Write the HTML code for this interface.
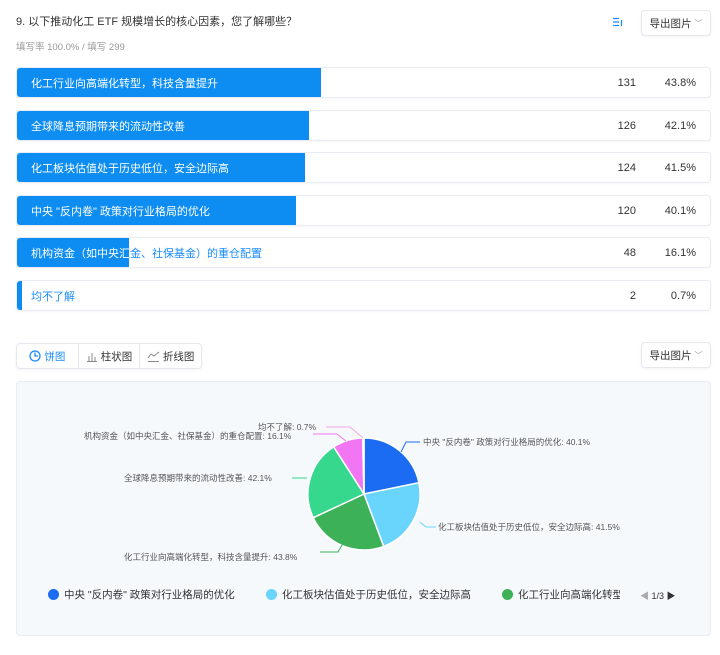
<!DOCTYPE html>
<html><head><meta charset="utf-8"><style>
*{margin:0;padding:0;box-sizing:border-box}
body{width:720px;height:655px;background:#fff;font-family:"Liberation Sans","Noto Sans CJK SC",sans-serif;position:relative;overflow:hidden;color:#333}
.abs{position:absolute}
.title{left:16px;top:13px;font-size:11px;color:#333}
.sub{left:16px;top:39px;font-size:9.5px;color:#999}
.btn{border:1px solid #e6e8ee;border-radius:4px;background:#fff;font-size:10.5px;color:#333;display:flex;align-items:center;justify-content:center;box-shadow:0 1px 3px rgba(0,0,0,.05)}
.row{position:absolute;left:16px;width:695px;height:31px;border:1px solid #e9edf3;border-radius:4px;background:#fff;overflow:hidden;box-shadow:0 1px 2px rgba(0,0,0,.04)}
.row .lb{position:absolute;left:14px;top:2px;line-height:29px;font-size:11px;color:#1a8cff;white-space:nowrap}
.row .bar{position:absolute;left:0;top:0;height:100%;background:#0d8cf2;overflow:hidden}
.row .bar .lb{color:#fff}
.row .n{position:absolute;right:74px;top:1px;line-height:29px;font-size:11px;color:#333}
.row .p{position:absolute;right:14px;top:1px;line-height:29px;font-size:11px;color:#333}
.tabs{left:16px;top:343px;width:186px;height:26px;border:1px solid #e6e8ee;border-radius:4px;display:flex;font-size:10.5px;box-shadow:0 1px 3px rgba(0,0,0,.05)}
.tabs div{flex:1;display:flex;align-items:center;justify-content:center;border-right:1px solid #e6e8ee;gap:3px}
.tabs div:last-child{border-right:none}
.panel{left:16px;top:381px;width:695px;height:255px;background:#f6f9fc;border:1px solid #e8edf3;border-radius:4px}
.pl{font-size:8.5px;color:#555;white-space:nowrap}
.lg{font-size:10.5px;color:#333;white-space:nowrap;top:587px}
.dot{display:inline-block;width:11px;height:11px;border-radius:50%;vertical-align:-2px;margin-right:5px}
</style></head><body>
<div class="abs title">9. 以下推动化工 ETF 规模增长的核心因素，您了解哪些？</div>
<div class="abs sub">填写率 100.0% / 填写 299</div>
<svg class="abs" style="left:613px;top:17px" width="10" height="10" viewBox="0 0 10 10"><path d="M0 1.5H6M0 5H6M0 8.5H6M8.5 3V9" stroke="#1a8cff" stroke-width="1.3"/></svg>
<div class="abs btn" style="left:641px;top:10px;width:70px;height:26px">导出图片 <span style="color:#999;font-size:8px;margin-left:3px">﹀</span></div>

<div class="row" style="top:67px"><div class="lb">化工行业向高端化转型，科技含量提升</div><div class="bar" style="width:304px"><div class="lb">化工行业向高端化转型，科技含量提升</div></div><div class="n">131</div><div class="p">43.8%</div></div>
<div class="row" style="top:110px"><div class="lb">全球降息预期带来的流动性改善</div><div class="bar" style="width:292px"><div class="lb">全球降息预期带来的流动性改善</div></div><div class="n">126</div><div class="p">42.1%</div></div>
<div class="row" style="top:152px"><div class="lb">化工板块估值处于历史低位，安全边际高</div><div class="bar" style="width:288px"><div class="lb">化工板块估值处于历史低位，安全边际高</div></div><div class="n">124</div><div class="p">41.5%</div></div>
<div class="row" style="top:195px"><div class="lb">中央 "反内卷" 政策对行业格局的优化</div><div class="bar" style="width:279px"><div class="lb">中央 "反内卷" 政策对行业格局的优化</div></div><div class="n">120</div><div class="p">40.1%</div></div>
<div class="row" style="top:237px"><div class="lb">机构资金（如中央汇金、社保基金）的重仓配置</div><div class="bar" style="width:112px"><div class="lb">机构资金（如中央汇金、社保基金）的重仓配置</div></div><div class="n">48</div><div class="p">16.1%</div></div>
<div class="row" style="top:280px"><div class="lb">均不了解</div><div class="bar" style="width:5px"><div class="lb">均不了解</div></div><div class="n">2</div><div class="p">0.7%</div></div>

<div class="abs tabs">
<div style="color:#1a8cff"><svg width="12" height="12" viewBox="0 0 12 12"><circle cx="6" cy="6" r="5" fill="none" stroke="#1a8cff" stroke-width="1.3"/><path d="M6 2.5V6H9" fill="none" stroke="#1a8cff" stroke-width="1.3"/></svg>饼图</div>
<div><svg width="12" height="11" viewBox="0 0 12 11"><path d="M1 10.5H11M3 10V5M6 10V2M9 10V6" stroke="#888" stroke-width="1"/></svg>柱状图</div>
<div><svg width="13" height="11" viewBox="0 0 13 11"><path d="M1 7L4 3L7 5L12 1M1 10.5H12" fill="none" stroke="#888" stroke-width="1"/></svg>折线图</div>
</div>
<div class="abs btn" style="left:641px;top:342px;width:70px;height:26px">导出图片 <span style="color:#999;font-size:8px;margin-left:3px">﹀</span></div>

<div class="abs panel"></div>
<svg class="abs" style="left:0;top:0" width="720" height="655">
<g stroke="#fff" stroke-width="1.5">
<path d="M364 494L364 438A56 56 0 0 1 418.9 482.7Z" fill="#1b6cf2"/>
<path d="M364 494L418.9 482.7A56 56 0 0 1 383.7 546.4Z" fill="#6ad5fc"/>
<path d="M364 494L383.7 546.4A56 56 0 0 1 313.2 517.7Z" fill="#3db157"/>
<path d="M364 494L313.2 517.7A56 56 0 0 1 333.7 446.9Z" fill="#35d88d"/>
<path d="M364 494L333.7 446.9A56 56 0 0 1 362.7 438Z" fill="#f276f4"/>
<path d="M364 494L362.7 438A56 56 0 0 1 364 438Z" fill="#b39df5"/>
</g>
<g fill="none" stroke-width="1">
<path d="M401 452L406 442H420" stroke="#1b6cf2"/>
<path d="M420 522L426 527H436" stroke="#6ad5fc"/>
<path d="M345 540L338 552H320" stroke="#3db157"/>
<path d="M307 478H292" stroke="#35d88d"/>
<path d="M346 441L337 434H313" stroke="#f276f4"/>
<path d="M363 438L350 427H326" stroke="#f2a6e0"/>
</g>
</svg>
<div class="abs pl" style="left:258px;top:421px">均不了解: 0.7%</div>
<div class="abs pl" style="left:84px;top:430px">机构资金（如中央汇金、社保基金）的重仓配置: 16.1%</div>
<div class="abs pl" style="left:423px;top:436px">中央 "反内卷" 政策对行业格局的优化: 40.1%</div>
<div class="abs pl" style="left:124px;top:472px">全球降息预期带来的流动性改善: 42.1%</div>
<div class="abs pl" style="left:438px;top:521px">化工板块估值处于历史低位，安全边际高: 41.5%</div>
<div class="abs pl" style="left:124px;top:551px">化工行业向高端化转型，科技含量提升: 43.8%</div>

<div class="abs lg" style="left:48px"><span class="dot" style="background:#1b6cf2"></span>中央 "反内卷" 政策对行业格局的优化</div>
<div class="abs lg" style="left:266px"><span class="dot" style="background:#6ad5fc"></span>化工板块估值处于历史低位，安全边际高</div>
<div class="abs lg" style="left:502px;width:118px;overflow:hidden"><span class="dot" style="background:#3db157"></span>化工行业向高端化转型，科技含量提升</div>
<div class="abs lg" style="left:640px;font-size:9px;top:589px"><span style="color:#aaa">◀</span> 1/3 <span style="color:#333">▶</span></div>
</body></html>
